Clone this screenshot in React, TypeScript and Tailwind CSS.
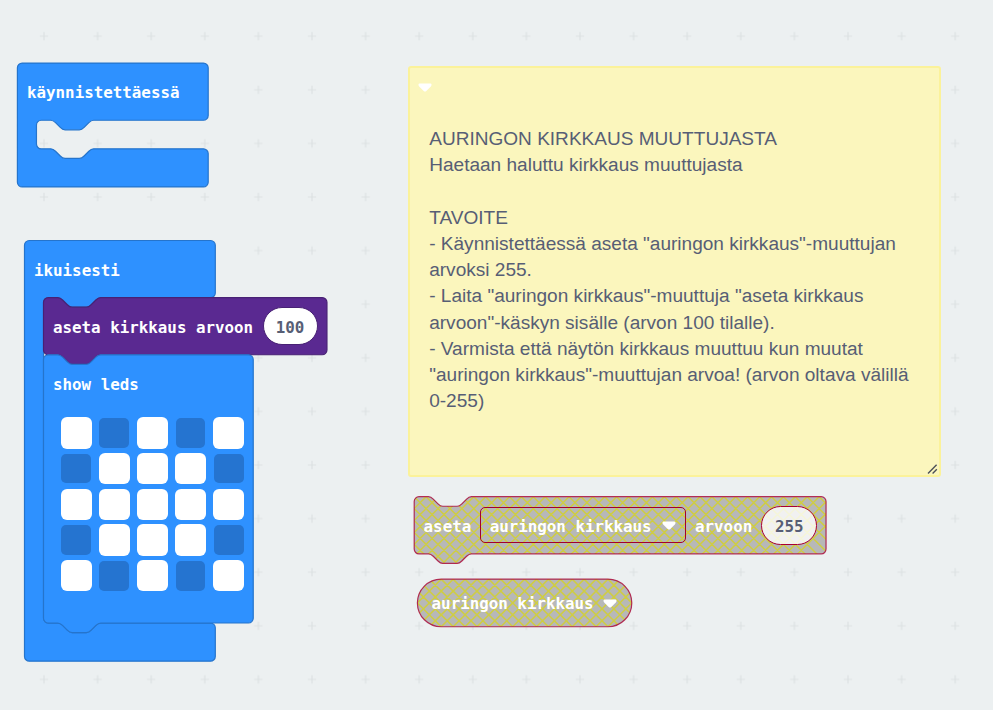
import { useId } from "react";
import type { ReactNode } from "react";

const NOTCH = "c 2,0 3,1 4,2 l 4,4 c 1,1 2,2 4,2 h 12 c 2,0 3,-1 4,-2 l 4,-4 c 1,-1 2,-2 4,-2";
const NOTCH_BACK = "c -2,0 -3,1 -4,2 l -4,4 c -1,1 -2,2 -4,2 h -12 c -2,0 -3,-1 -4,-2 l -4,-4 c -1,-1 -2,-2 -4,-2";

function wrapperPath(inner: number) {
  return `M 0,4 a 4,4 0 0,1 4,-4 H 156.2 a 4,4 0 0,1 4,4 v 40 a 4,4 0 0,1 -4,4 H 64 ${NOTCH_BACK} h -8 a 4,4 0 0,0 -4,4 v ${inner - 8} a 4,4 0 0,0 4,4 h 8 ${NOTCH} H 156.2 a 4,4 0 0,1 4,4 v 24 a 4,4 0 0,1 -4,4 H 4 a 4,4 0 0,1 -4,-4 z`;
}

function statementPath(width: number, height: number) {
  return `M 0,4 a 4,4 0 0,1 4,-4 h 8 ${NOTCH} H ${width - 4} a 4,4 0 0,1 4,4 v ${height - 8} a 4,4 0 0,1 -4,4 H 48 ${NOTCH_BACK} h -8 a 4,4 0 0,1 -4,-4 z`;
}

// Diagonals in both directions, crossing every 10 units
const HATCH = Array.from({ length: 44 }, (_, i) => {
  const x = (i - 6) * 10;
  return `M ${x},0 l 60,60 M ${x},0 l -60,60`;
}).join(" ");

function Shape({ d, x, y, fill, stroke }: { d: string; x: number; y: number; fill: string; stroke: string }) {
  return (
    <svg className="absolute left-0 top-0 h-px w-px overflow-visible">
      <g transform={`translate(${x} ${y}) scale(1.191)`}>
        <path d={d} fill={fill} stroke={stroke} strokeWidth="1" />
      </g>
    </svg>
  );
}

function DisabledShape({ d, x, y }: { d: string; x: number; y: number }) {
  const id = useId();
  return (
    <svg className="absolute left-0 top-0 h-px w-px overflow-visible">
      <g transform={`translate(${x} ${y}) scale(1.191)`}>
        <clipPath id={id}>
          <path d={d} />
        </clipPath>
        <path d={d} fill="#b7b8b8" />
        <path d={HATCH} stroke="#cfcd42" strokeWidth="1.25" fill="none" clipPath={`url(#${id})`} />
        <path d={d} fill="none" stroke="#a80032" strokeOpacity="0.8" strokeWidth="1" />
      </g>
    </svg>
  );
}

function Block({ place, children }: { place: string; children: ReactNode }) {
  return (
    <div className={`absolute font-['DejaVu_Sans_Mono',monospace] text-[15.83px] font-bold text-white whitespace-pre ${place}`}>
      {children}
    </div>
  );
}

function Caret({ className = "" }: { className?: string }) {
  return (
    <svg className={`h-[9px] w-[14px] shrink-0 ${className}`} viewBox="0 0 14 9">
      <path d="M1.5 .4 H12.5 Q13.5 .4 13.5 1.4 V1.9 Q13.5 2.8 12.8 3.5 L8.3 7.9 Q7 9 5.7 7.9 L1.2 3.5 Q.5 2.8 .5 1.9 V1.4 Q.5 .4 1.5 .4Z" fill="#fff" />
    </svg>
  );
}

const LEDS = ["#.#.#", ".###.", "#####", ".###.", "#.#.#"];

const NOTE = [
  "AURINGON KIRKKAUS MUUTTUJASTA",
  "Haetaan haluttu kirkkaus muuttujasta",
  "",
  "TAVOITE",
  '- Käynnistettäessä aseta "auringon kirkkaus"-muuttujan',
  "arvoksi 255.",
  '- Laita "auringon kirkkaus"-muuttuja "aseta kirkkaus',
  'arvoon"-käskyn sisälle (arvon 100 tilalle).',
  "- Varmista että näytön kirkkaus muuttuu kun muutat",
  '"auringon kirkkaus"-muuttujan arvoa! (arvon oltava välillä',
  "0-255)",
];

export default function App() {
  return (
    <main className="relative h-[710px] w-[993px] overflow-hidden bg-[#ecf0f1]">
      <svg className="absolute inset-0 h-full w-full">
        <defs>
          <pattern id="grid" x="17.2" y="9.4" width="53.6" height="53.6" patternUnits="userSpaceOnUse">
            <path d="M22.6 26.8 h8.4 M26.8 22.6 v8.4" stroke="#dde1e3" strokeWidth="1.2" />
          </pattern>
        </defs>
        <rect width="993" height="710" fill="url(#grid)" />
      </svg>

      <Block place="left-[17px] top-[63px] w-[191px] h-[124px]">
        <Shape x={0.4} y={0.1} d={wrapperPath(24)} fill="#2e91ff" stroke="#2574cc" />
        <div className="relative flex h-[57px] items-center pl-[10px] pt-[2px]">käynnistettäessä</div>
      </Block>

      <Block place="left-[24px] top-[240px] w-[191px] h-[420px]">
        <Shape x={0.5} y={0.5} d={wrapperPath(273.2)} fill="#2e91ff" stroke="#2574cc" />
        <div className="relative flex h-[57px] items-center pl-[10px] pt-[4px]">ikuisesti</div>
      </Block>

      <Block place="left-[43px] top-[297px] w-[284px] h-[57px]">
        <Shape x={0.5} y={0.6} d={statementPath(238, 48)} fill="#5a2991" stroke="#482174" />
        <div className="relative flex h-[58px] items-center pl-[10px]">
          <span className="pt-[3px]">aseta kirkkaus arvoon</span>
          <span className="ml-[9.4px] flex h-[38.6px] w-[55px] items-center justify-center rounded-full border border-[#482174] bg-white pt-[3px] text-[#575e75]">100</span>
        </div>
      </Block>

      <Block place="left-[43px] top-[354px] w-[210px] h-[268px]">
        <Shape x={0.5} y={0.8} d={statementPath(176.1, 225.2)} fill="#2e91ff" stroke="#2574cc" />
        <div className="relative flex h-[58px] items-center pl-[10px] pt-[3px]">show leds</div>
        <div className="relative ml-[17.6px] mt-[5.2px] grid w-[184px] grid-cols-[repeat(5,31.4px)] gap-x-[6.7px] gap-y-[4.3px]">
          {LEDS.join("").split("").map((led, i) =>
            led === "#" ? (
              <span key={i} className="h-[31.4px] rounded-[6px] bg-white" />
            ) : (
              <span key={i} className="m-[0.8px] h-[29.8px] rounded-[5px] bg-[#2574d0]" />
            )
          )}
        </div>
      </Block>

      <section className="absolute left-[407.5px] top-[66px] h-[411px] w-[533.5px] rounded-[3px] border-[2.4px] border-[#fbf29a] bg-[#fbf6bd]">
        <Caret className="ml-[8px] mt-[15px]" />
        <div className="ml-[19.7px] mt-[34.3px] whitespace-pre font-['Liberation_Sans',Arial,sans-serif] text-[19.06px] leading-[26.2px] text-[#575e75]">
          {NOTE.map((line, i) => (
            <p key={i} className="h-[26.2px]">{line}</p>
          ))}
        </div>
        <svg className="absolute bottom-[1px] right-[1px] h-[10px] w-[11px]" viewBox="0 0 11 10">
          <path d="M1 9.4 L9.6 .8 M5.6 9.4 L9.8 5.2" stroke="#4c5058" strokeWidth="1.4" />
        </svg>
      </section>

      <Block place="left-[414px] top-[496px] w-[412px] h-[57px]">
        <DisabledShape x={0.2} y={0.7} d={statementPath(345.8, 48)} />
        <div className="relative flex h-[58px] items-center pl-[9.6px]">
          <span className="pt-[3px]">aseta</span>
          <span className="ml-[8.4px] flex h-[36px] w-[206px] items-center rounded-[5px] border-[1.2px] border-[#a3002c] pl-[9px]">
            <span className="pt-[3px]">auringon kirkkaus</span>
            <Caret className="ml-[10px]" />
          </span>
          <span className="ml-[9.4px] pt-[3px]">arvoon</span>
          <span className="ml-[9px] flex h-[39px] w-[56px] items-center justify-center rounded-full border border-[#a80032] bg-white/80 pt-[3px] text-[#575e75]">255</span>
        </div>
      </Block>

      <Block place="left-[417px] top-[579px] w-[215px] h-[48px]">
        <DisabledShape x={0.4} y={0.1} d="M 20,0 H 160 a 20,20 0 0,1 0,40 H 20 a 20,20 0 0,1 0,-40 z" />
        <div className="relative flex h-[48px] items-center pl-[14.6px]">
          <span className="pt-[2px]">auringon kirkkaus</span>
          <Caret className="ml-[9.5px]" />
        </div>
      </Block>
    </main>
  );
}
